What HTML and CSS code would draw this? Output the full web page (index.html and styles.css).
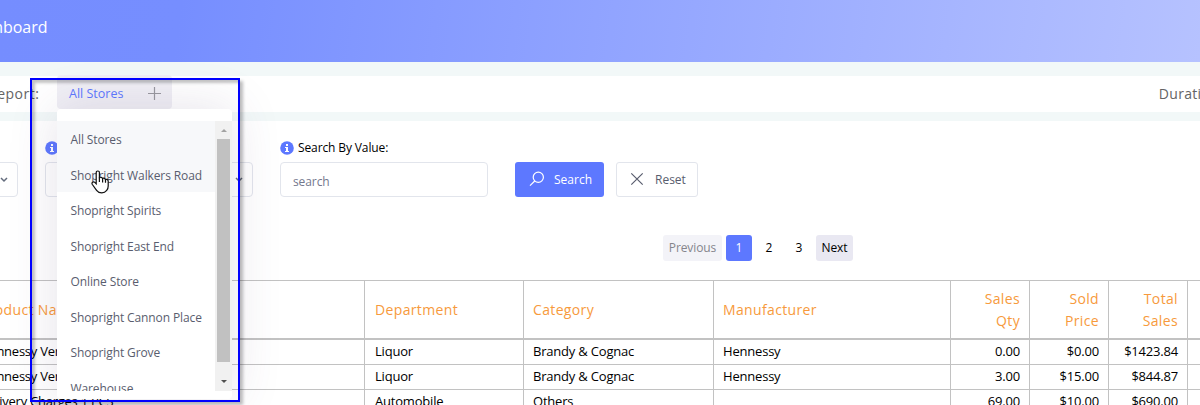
FILE: index.html
```html
<!DOCTYPE html>
<html lang="en">
<head>
<meta charset="utf-8">
<title>Dashboard</title>
<link rel="stylesheet" href="styles.css">
</head>
<body>
<div class="page">
  <header class="header"><span class="header-title">Dashboard</span></header>
  <section class="report-bar">
    <span class="report-label">Report:</span>
    <button class="store-toggle">All Stores
      <svg class="plus" viewBox="0 0 13 13" width="13" height="13"><path d="M6.5 0v13M0 6.5h13"/></svg>
    </button>
    <span class="duration">Duration:</span>
  </section>
  <main class="panel">
    <div class="filters">
      <div class="select select-first"><svg class="chev" viewBox="0 0 8 6" width="8" height="6"><path d="M1 1l3 3 3-3"/></svg></div>
      <div class="field field-by">
        <div class="label"><svg class="info" viewBox="0 0 14 14" width="14" height="14"><circle cx="7" cy="7" r="6.8"/><path d="M6 3h2v2H6zM5 6h3v4h1v1H5v-1h1V7H5z"/></svg></div>
        <div class="select"><svg class="chev" viewBox="0 0 8 6" width="8" height="6"><path d="M1 1l3 3 3-3"/></svg></div>
      </div>
      <div class="field">
        <label class="label"><svg class="info" viewBox="0 0 14 14" width="14" height="14"><circle cx="7" cy="7" r="6.8"/><path d="M6 3h2v2H6zM5 6h3v4h1v1H5v-1h1V7H5z"/></svg>Search By Value:</label>
        <input class="input" placeholder="search">
      </div>
      <button class="btn btn-search"><svg viewBox="0 0 16 16" width="16" height="16"><circle cx="9.3" cy="6.3" r="5.1"/><path d="M5.7 10L1 14.7"/></svg>Search</button>
      <button class="btn btn-reset"><svg viewBox="0 0 14 14" width="14" height="14"><path d="M1.3 1.3l11.4 11.4M12.7 1.3L1.3 12.7"/></svg>Reset</button>
    </div>
    <nav class="pager">
      <span class="pg pg-prev">Previous</span><span class="pg pg-on">1</span><span class="pg">2</span><span class="pg">3</span><span class="pg pg-next">Next</span>
    </nav>
    <div class="table">
      <div class="row head"><span>Product Name</span><span>Department</span><span>Category</span><span>Manufacturer</span><span class="num">Sales<br>Qty</span><span class="num">Sold<br>Price</span><span class="num">Total<br>Sales</span><span></span></div>
      <div class="row"><span>Hennessy Very</span><span>Liquor</span><span>Brandy &amp; Cognac</span><span>Hennessy</span><span class="num">0.00</span><span class="num">$0.00</span><span class="num">$1423.84</span><span></span></div>
      <div class="row"><span>Hennessy Very</span><span>Liquor</span><span>Brandy &amp; Cognac</span><span>Hennessy</span><span class="num">3.00</span><span class="num">$15.00</span><span class="num">$844.87</span><span></span></div>
      <div class="row"><span>Delivery Charges 1 PCS</span><span>Automobile</span><span>Others</span><span></span><span class="num">69.00</span><span class="num">$10.00</span><span class="num">$690.00</span><span></span></div>
    </div>
  </main>
  <div class="menu">
    <ul class="list">
      <li class="on">All Stores</li><li class="on">Shopright Walkers Road</li><li>Shopright Spirits</li><li>Shopright East End</li><li>Online Store</li><li>Shopright Cannon Place</li><li>Shopright Grove</li><li>Warehouse</li>
    </ul>
    <div class="scroll"><i class="arrow up"></i><i class="thumb"></i><i class="arrow down"></i></div>
  </div>
  <div class="frame"></div>
  <svg class="cursor" viewBox="0 0 18 24" width="18" height="24"><path d="M5.2 13.8V2.7Q5.2 1 6.8 1T8.4 2.7V8.2Q8.8 7 10.2 7.3T11.6 8.9Q12 7.9 13.1 8.2T14.5 9.8Q15 9 16 9.4T17.2 11V16Q17.2 18.8 15.7 20.4Q13.8 22.8 10.8 22.8Q7.3 22.8 5.6 20.3L1.2 14.3Q.6 13 1.6 12.2T3.8 12.4Z"/><path d="M8.4 7.5V12M11.6 8.5V12.4M14.5 9.8V12.8"/></svg>
</div>
</body>
</html>
```
FILE: styles.css
```css
* { box-sizing: border-box; }
body { margin: 0; font: 13px/19px "Open Sans", "Noto Sans", sans-serif; color: #000; }
button { font: inherit; border: 0; }
.page { position: relative; width: 1200px; height: 405px; overflow: hidden; background: #f2f8f8; }
.header { height: 62px; display: flex; align-items: center; padding-bottom: 8px; background: linear-gradient(98deg, #758dff 0%, #768eff 15%, #b6c2ff 100%); color: #fff; font-size: 16px; }
.header-title { margin-left: -35px; }
.report-bar { height: 36px; margin-top: 14px; background: #fff; display: flex; align-items: center; font-size: 14px; letter-spacing: .3px; }
.report-label { width: 69px; margin-left: -12px; margin-top: -1px; color: #646464; letter-spacing: .5px; }
.store-toggle { width: 115px; height: 34px; margin-top: -4px; padding: 2px 11px 0 12px; display: flex; align-items: center; justify-content: space-between; background: #f0eff5; border-radius: 4px; color: #5d78ff; font-size: 12.5px; letter-spacing: 0; }
.plus { fill: none; stroke: #98989f; stroke-width: 1.2; }
.duration { margin: -1px -23px 0 auto; color: #646464; }
.panel { height: 284px; margin-top: 9px; padding-top: 17px; background: #fff; }
.filters { display: flex; align-items: flex-end; height: 59px; }
.select { height: 35px; border: 1px solid #e2e5ec; border-radius: 4px; display: flex; align-items: center; justify-content: flex-end; padding-right: 9px; }
.select-first { width: 58px; margin-left: -40px; margin-right: 27px; }
.chev { fill: none; stroke: #646c7d; stroke-width: 1.5; }
.field-by { width: 208px; margin-right: 27px; }
.label { display: flex; align-items: center; gap: 4px; height: 19px; margin-bottom: 5px; font-size: 12px; letter-spacing: -.12px; }
.info circle { fill: #5d78ff; }
.info path { fill: #fff; }
.input { display: block; width: 208px; height: 35px; border: 1px solid #e2e5ec; border-radius: 4px; padding: 3px 12px 0; font: inherit; font-size: 12px; letter-spacing: -.1px; }
.input::placeholder { color: #74788d; }
.btn { height: 35px; display: flex; align-items: center; border-radius: 3px; font-size: 12px; letter-spacing: 0; }
.btn svg { fill: none; stroke: currentColor; stroke-width: 1.2; }
.btn-search { width: 89px; margin-left: 27px; padding: 0 0 1px 14px; gap: 9px; background: #5d78ff; color: #fff; }
.btn-reset { width: 82px; margin-left: 12px; padding: 0 0 1px 13px; gap: 11px; background: #fff; border: 1px solid #e2e5ec; color: #595d6e; }
.pager { display: flex; gap: 4px; margin: 38px 0 19px 663px; height: 26px; font-size: 12px; letter-spacing: -.1px; }
.pg { width: 26px; line-height: 26px; text-align: center; border-radius: 3px; }
.pg-prev { width: 59px; background: #f3f3f8; color: #85858c; }
.pg-on { background: #5d78ff; color: #fff; }
.pg-next { width: 37px; background: #e9e8f2; }
.table { margin-left: -30px; width: 1260px; border-top: 1px solid #c2c2c2; }
.row { display: grid; grid-template-columns: 395px 159px 190px 237px 79px 79px 79px 1fr; height: 25px; border-bottom: 1px solid #c2c2c2; letter-spacing: -.2px; }
.row > span { border-right: 1px solid #c2c2c2; padding: 2px 8px 0 10px; white-space: nowrap; }
.row > span:first-child { letter-spacing: -.25px; }
.row > span:nth-child(3), .row > span:nth-child(4) { padding-left: 9px; }
.row > .num { text-align: right; padding-right: 9px; }
.row.head { height: 59px; border-bottom-width: 2px; color: #f79a3c; font-size: 14px; font-weight: 500; line-height: 22px; letter-spacing: .35px; }
.row.head > span { padding-top: 18px; }
.row.head > span:first-child { letter-spacing: .35px; }
.row.head > .num { padding-top: 7px; }
.menu { position: absolute; left: 57px; top: 109px; width: 175px; height: 290px; padding: 12px 0 8px; background: #fff; border-radius: 4px; box-shadow: 0 0 50px rgba(82,63,105,.15); display: flex; }
.list { flex: 1; height: 270px; margin: 0; padding: 0; overflow: hidden; list-style: none; color: #595d6e; font-size: 12px; letter-spacing: -.11px; }
.list li { height: 35.5px; padding-left: 13.5px; line-height: 37px; white-space: nowrap; }
.list .on { background: #f7f8fa; }
.scroll { width: 17px; height: 270px; background: #f1f1f1; display: flex; flex-direction: column; align-items: center; }
.arrow { border: 3.5px solid transparent; width: 0; height: 0; }
.up { border-bottom-color: #a3a3a3; border-top: 0; margin: 8px 0 7px; }
.down { border-top-color: #505050; border-bottom: 0; margin-top: 18px; }
.thumb { width: 13px; height: 223px; background: #c1c1c1; }
.frame { position: absolute; left: 30px; top: 78px; width: 210px; height: 324px; border: 2px solid #00f; box-shadow: 3px 3px 3px rgba(0,0,0,.25), inset 3px 3px 3px rgba(0,0,0,.23); }
.cursor { position: absolute; left: 91px; top: 170px; fill: #fff; stroke: #111; stroke-width: 1.2; }
```
